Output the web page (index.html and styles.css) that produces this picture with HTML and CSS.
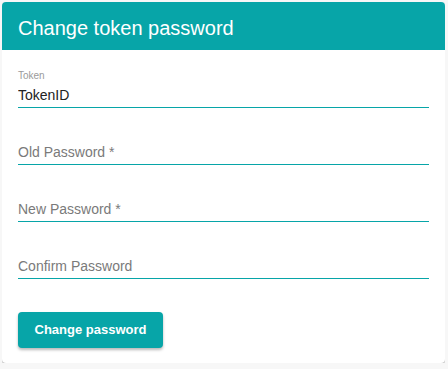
FILE: index.html
```html
<!DOCTYPE html>
<html lang="en">
<head>
<meta charset="utf-8">
<title>Change token password</title>
<link rel="stylesheet" href="styles.css">
</head>
<body>
<div class="card">
  <div class="card-header">Change token password</div>
  <form class="card-body">
    <label class="field">
      <span class="field-label">Token</span>
      <input class="field-input" type="text" value="TokenID">
    </label>
    <label class="field">
      <span class="field-label"></span>
      <input class="field-input" type="password" placeholder="Old Password *">
    </label>
    <label class="field">
      <span class="field-label"></span>
      <input class="field-input" type="password" placeholder="New Password *">
    </label>
    <label class="field">
      <span class="field-label"></span>
      <input class="field-input" type="password" placeholder="Confirm Password">
    </label>
    <div class="actions">
      <button class="btn" type="button">Change password</button>
    </div>
  </form>
</div>
</body>
</html>
```

FILE: styles.css
```css
html, body {
  background: #f7f7f7;
}
body {
  margin: 2px 3px 2px 2px;
  font-family: "Liberation Sans", Arial, sans-serif;
}
.card {
  background: #fff;
  border-radius: 4px;
  overflow: hidden;
  box-shadow: 0 1px 3px rgba(0, 0, 0, 0.22), 0 1px 1px rgba(0, 0, 0, 0.12);
}
.card-header {
  background: #07a5a8;
  color: #fff;
  font-size: 20px;
  height: 44px;
  line-height: 44px;
  padding: 4px 16px 0;
}
.card-body {
  display: flex;
  flex-direction: column;
  gap: 19px;
  padding: 20px 16px 15px;
  margin: 0;
}
.field {
  display: flex;
  flex-direction: column;
}
.field-label {
  display: block;
  height: 12px;
  font-size: 10px;
  line-height: 12px;
  color: #9a9a9a;
}
.field-input {
  display: block;
  width: 100%;
  box-sizing: border-box;
  margin: 0;
  border: none;
  border-bottom: 1px solid #07a5a8;
  outline: none;
  background: transparent;
  padding: 3px 0 2px;
  font-family: "Liberation Sans", Arial, sans-serif;
  font-size: 14px;
  line-height: 20px;
  height: 26px;
  color: #222;
}
.field-input::placeholder {
  color: #7a7a7a;
  opacity: 1;
}
.actions {
  display: flex;
  padding-top: 14px;
}
.btn {
  background: #07a5a8;
  color: #fff;
  border: none;
  border-radius: 4px;
  height: 36px;
  padding: 0 16.5px;
  font-family: "Liberation Sans", Arial, sans-serif;
  font-weight: bold;
  font-size: 13px;
  line-height: 36px;
  box-shadow: 0 2px 3px rgba(0, 0, 0, 0.28);
}
```
